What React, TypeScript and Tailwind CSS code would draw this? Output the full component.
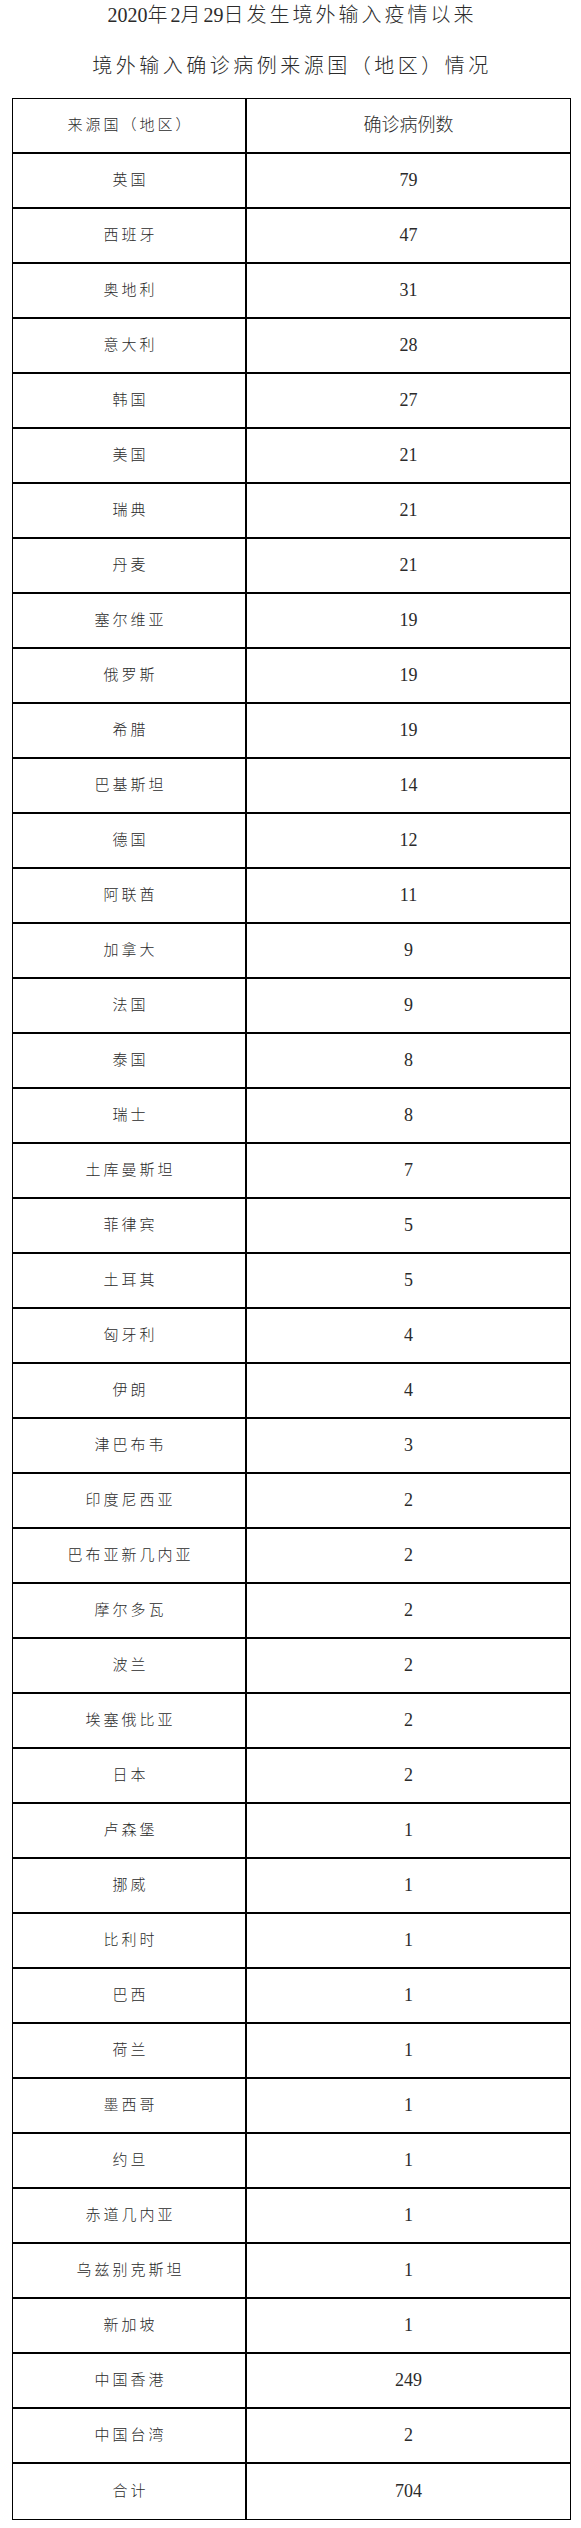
import React from 'react';

type Row = { name: string; count: string };

const rows: Row[] = [
  { name: '英国', count: '79' },
  { name: '西班牙', count: '47' },
  { name: '奥地利', count: '31' },
  { name: '意大利', count: '28' },
  { name: '韩国', count: '27' },
  { name: '美国', count: '21' },
  { name: '瑞典', count: '21' },
  { name: '丹麦', count: '21' },
  { name: '塞尔维亚', count: '19' },
  { name: '俄罗斯', count: '19' },
  { name: '希腊', count: '19' },
  { name: '巴基斯坦', count: '14' },
  { name: '德国', count: '12' },
  { name: '阿联酋', count: '11' },
  { name: '加拿大', count: '9' },
  { name: '法国', count: '9' },
  { name: '泰国', count: '8' },
  { name: '瑞士', count: '8' },
  { name: '土库曼斯坦', count: '7' },
  { name: '菲律宾', count: '5' },
  { name: '土耳其', count: '5' },
  { name: '匈牙利', count: '4' },
  { name: '伊朗', count: '4' },
  { name: '津巴布韦', count: '3' },
  { name: '印度尼西亚', count: '2' },
  { name: '巴布亚新几内亚', count: '2' },
  { name: '摩尔多瓦', count: '2' },
  { name: '波兰', count: '2' },
  { name: '埃塞俄比亚', count: '2' },
  { name: '日本', count: '2' },
  { name: '卢森堡', count: '1' },
  { name: '挪威', count: '1' },
  { name: '比利时', count: '1' },
  { name: '巴西', count: '1' },
  { name: '荷兰', count: '1' },
  { name: '墨西哥', count: '1' },
  { name: '约旦', count: '1' },
  { name: '赤道几内亚', count: '1' },
  { name: '乌兹别克斯坦', count: '1' },
  { name: '新加坡', count: '1' },
  { name: '中国香港', count: '249' },
  { name: '中国台湾', count: '2' },
  { name: '合计', count: '704' },
];

const font = "font-['Liberation_Serif','Noto_Sans_CJK_SC',serif]";

// digits in the title keep normal spacing, CJK glyphs are spread out
function Num({ children }: { children: React.ReactNode }) {
  return <span className="tracking-normal">{children}</span>;
}

function TableRow({ left, right, last }: { left: string; right: string; last?: boolean }) {
  return (
    <div className={`flex h-[55px] ${last ? 'h-[53px]' : 'border-b-2 border-black'}`}>
      <div className="w-[232px] flex items-center justify-center text-[15px] tracking-[3px] pl-[3px]">
        {left}
      </div>
      <div className="w-[2px] bg-black" />
      <div className="flex-1 flex items-center justify-center text-[18px]">{right}</div>
    </div>
  );
}

export default function App() {
  return (
    <div className={`w-[581px] min-h-[2528px] bg-white text-[#2b2b2b] font-light ${font}`}>
      <div className="text-center text-[20px] tracking-[3px] pl-[3px]">
        <p className="leading-[30px]">
          <Num>2020</Num>年<Num>2</Num>月<Num>29</Num>日发生境外输入疫情以来
        </p>
        <p className="leading-[30px] mt-[21px] tracking-[3.5px]">境外输入确诊病例来源国（地区）情况</p>
      </div>

      <div className="ml-[12px] mt-[17px] w-[559px] border border-black">
        <TableRow left="来源国（地区）" right="确诊病例数" />
        {rows.map((r, i) => (
          <TableRow key={r.name} left={r.name} right={r.count} last={i === rows.length - 1} />
        ))}
      </div>
    </div>
  );
}
